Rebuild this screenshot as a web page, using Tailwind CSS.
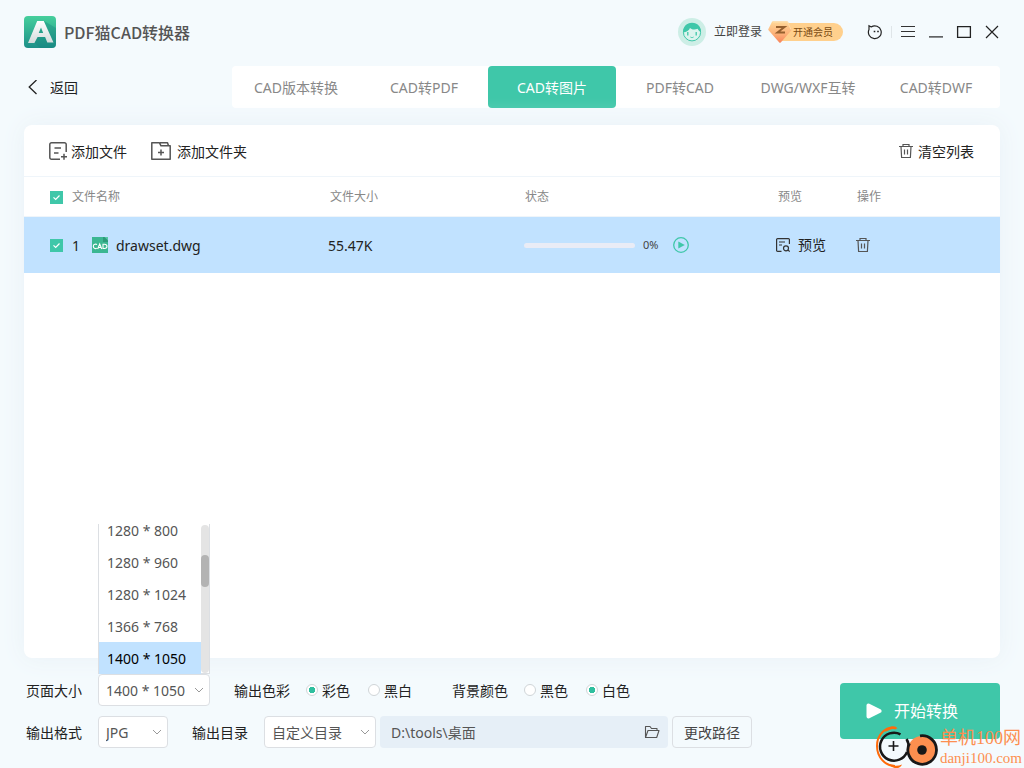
<!DOCTYPE html>
<html lang="zh-CN">
<head>
<meta charset="utf-8">
<meta name="viewport" content="width=device-width, initial-scale=1">
<title>PDF猫CAD转换器</title>
<script src="https://cdn.jsdelivr.net/npm/@tailwindcss/browser@4"></script>
</head>
<body class="relative flex min-h-screen flex-col bg-[#f4fafd] px-6 pb-5 font-['Noto_Sans','Noto_Sans_CJK_SC',sans-serif] text-sm leading-5 text-[#222]">

<header class="flex h-16 items-center justify-between">
  <div class="flex items-center gap-2">
    <svg class="size-8" viewBox="0 0 32 32" aria-hidden="true">
      <defs>
        <linearGradient id="logoBg" x1="0" y1="0" x2="0" y2="1"><stop offset="0" stop-color="#46cf9c"/><stop offset="1" stop-color="#1c8f88"/></linearGradient>
        <linearGradient id="logoA" x1="0" y1="0" x2="0" y2="1"><stop offset="0" stop-color="#ffffff"/><stop offset="1" stop-color="#d3dbdb"/></linearGradient>
      </defs>
      <rect width="32" height="32" rx="4" fill="url(#logoBg)"/>
      <path d="M20 5l12 7v16a4 4 0 0 1-4 4H16l-6-6z" fill="#15807c" opacity=".35"/>
      <path d="M13.200 5h6.600L29.500 26.500h-6.200l-2.200-5.500h-7.500l-3.200 6H4z M17 11.500l-2.300 5.500h4.500z" fill="url(#logoA)" fill-rule="evenodd"/>
    </svg>
    <h1 class="font-['Noto_Sans_CJK_SC',sans-serif] text-base leading-6 font-medium text-[#555]">PDF猫CAD转换器</h1>
  </div>
  <div class="flex items-center">
    <button type="button" class="flex items-center gap-2 text-xs text-[#444]">
      <svg class="size-7" viewBox="0 0 28 28" aria-hidden="true">
        <circle cx="14" cy="14" r="14" fill="#cdeee6"/>
        <circle cx="14" cy="14.300" r="8.600" fill="#dcf4ee" stroke="#3fc7a9"/>
        <path d="M5.200 14.500C4.800 8.500 9 4.800 14 4.800c5.500 0 9.300 4 8.900 9.400-1.300-.6-2.400-1.700-3.200-3.400-3.500 1.500-6.500.6-7.700-.8-.9 2.400-3.500 4.200-6.800 4.500z" fill="#3fc7a9"/>
        <path d="M9.800 14v3.500M18.200 14v3.500" stroke="#3fc7a9" stroke-width="1.300"/>
        <path d="M12.300 19q1.700 1.500 3.400 0" fill="none" stroke="#3fc7a9" stroke-width=".8"/>
      </svg>
      立即登录
    </button>
    <button type="button" class="ml-1.5 flex items-center">
      <svg class="relative -mr-3 h-6 w-6" viewBox="0 0 24 24" aria-hidden="true">
        <defs><linearGradient id="gem" x1="0" y1="0" x2="0" y2="1"><stop offset="0" stop-color="#ffd596"/><stop offset=".6" stop-color="#fcb078"/><stop offset="1" stop-color="#f98a5e"/></linearGradient></defs>
        <path d="M5 2.500h14l3.500 7L12 21.500 1.500 9.500z" fill="url(#gem)" stroke="url(#gem)" stroke-width="2.500" stroke-linejoin="round"/>
        <path d="M5 2h14.500L23 9.500" fill="none" stroke="#ffe2b4" stroke-width="1" opacity=".8"/>
        <path d="M8 7h8.500L9.500 12.500H17" fill="none" stroke="#96602f" stroke-width="2"/>
      </svg>
      <span class="rounded-r-full bg-[#ffd08d] pr-2.5 pl-[13px] text-[10px] leading-[18px] text-[#7a4a12]">开通会员</span>
    </button>
    <button type="button" class="ml-6" aria-label="反馈">
      <svg class="size-4" viewBox="0 0 16 16" fill="none" stroke="#222" stroke-width="1.200" aria-hidden="true"><path d="M4.200 3A6.400 6.400 0 1 1 2 5.600L2 1.800l2.300 1.300"/><path d="M7.500 6.700v1.600M11 6.700v1.600" stroke-width="1.600"/></svg>
    </button>
    <span class="mx-2 h-3 w-px bg-[#dfe5e8]"></span>
    <div class="flex items-center gap-3">
      <button type="button" aria-label="菜单"><svg class="size-4" viewBox="0 0 16 16" stroke="#333" stroke-width="1" aria-hidden="true"><path d="M1 2.500h14M1 7.500h14M1 12.500h14"/></svg></button>
      <button type="button" aria-label="最小化"><svg class="size-4" viewBox="0 0 16 16" stroke="#222" stroke-width="1.200" aria-hidden="true"><path d="M1 12.900h14"/></svg></button>
      <button type="button" aria-label="最大化"><svg class="size-4" viewBox="0 0 16 16" fill="none" stroke="#222" stroke-width="1.300" aria-hidden="true"><path d="M1.600 2.600h12.800v10.800H1.600z"/></svg></button>
      <button type="button" aria-label="关闭"><svg class="size-4" viewBox="0 0 16 16" stroke="#222" stroke-width="1.200" aria-hidden="true"><path d="M2 2l12 12M14 2L2 14"/></svg></button>
    </div>
  </div>
</header>

<div class="mt-0.5 flex items-center">
  <div class="w-52 shrink-0 pt-0.5">
    <button type="button" class="flex items-center gap-3 pl-1">
      <svg class="h-4 w-2.5" viewBox="0 0 10 16" fill="none" stroke="#222" stroke-width="1.300" aria-hidden="true"><path d="M8.500 0L1.200 7l7.300 7"/></svg>
      返回
    </button>
  </div>
  <nav class="grid h-[42px] flex-1 grid-cols-6 rounded bg-white text-center leading-10 text-[#888]">
    <a href="#" class="pt-0.5">CAD版本转换</a>
    <a href="#" class="pt-0.5">CAD转PDF</a>
    <a href="#" aria-current="page" class="rounded bg-[#3fc7a9] pt-0.5 text-white">CAD转图片</a>
    <a href="#" class="pt-0.5">PDF转CAD</a>
    <a href="#" class="pt-0.5">DWG/WXF互转</a>
    <a href="#" class="pt-0.5">CAD转DWF</a>
  </nav>
</div>

<main class="mt-[17px] flex-1 rounded-lg bg-white shadow-[0_0_24px_#e9f1f6]">
  <div class="flex h-[52px] items-center border-b border-[#eff5fa] pr-[26px] pl-[25px]">
    <button type="button" class="flex items-center gap-1">
      <svg class="size-[18px]" viewBox="0 0 18 18" fill="none" stroke="#555" stroke-width="1.500" aria-hidden="true"><path d="M11 17.200H2.500A1.700 1.700 0 0 1 .8 15.500v-13A1.700 1.700 0 0 1 2.500.8h13a1.700 1.700 0 0 1 1.700 1.700V10M5.500 6H12M5 11h4.500M12 14.700h6M15 11.700v6"/></svg>
      <span class="pt-0.5">添加文件</span>
    </button>
    <button type="button" class="ml-6 flex items-center gap-1.5">
      <svg class="h-[18px] w-5" viewBox="0 0 20 18" fill="none" stroke="#555" stroke-width="1.500" stroke-linejoin="round" aria-hidden="true"><path d="M.8 17.200V.8h7.700l1.500 3h9.200v13.400zM9 .8h7.500l1 3M7 10.500h6M10 7.500v6"/></svg>
      <span class="pt-0.5">添加文件夹</span>
    </button>
    <button type="button" class="ml-auto flex items-center gap-1">
      <svg class="size-4" viewBox="0 0 16 16" fill="none" stroke="#555" stroke-width="1.200" aria-hidden="true"><path d="M1 3.500h14M5 3.300V1.500h6v1.800M3 3.500l.6 11h8.800l.6-11M6.500 6.500v5M9.500 6.500v5"/></svg>
      <span class="pt-0.5">清空列表</span>
    </button>
  </div>

  <table class="w-full table-fixed text-left">
    <colgroup><col class="w-[304px]"><col class="w-[196px]"><col><col class="w-20"><col class="w-36"></colgroup>
    <thead>
      <tr class="h-10 text-xs text-[#888] shadow-[inset_0_-1px_0_#eff5fa]">
        <th class="py-0 pl-[26px] font-normal">
          <label class="flex items-center gap-[9px]">
            <span class="grid">
              <input type="checkbox" checked class="size-[13px] appearance-none bg-[#3fc7a9] [grid-area:1/1]">
              <svg class="pointer-events-none size-[13px] [grid-area:1/1]" viewBox="0 0 13 13" fill="none" stroke="#fff" stroke-width="1.200" aria-hidden="true"><path d="M3.500 6.300l2.200 2.200L9.500 4.500"/></svg>
            </span>
            文件名称
          </label>
        </th>
        <th class="py-0 pl-0.5 font-normal">文件大小</th>
        <th class="py-0 pl-px font-normal">状态</th>
        <th class="py-0 pl-0.5 font-normal">预览</th>
        <th class="py-0 pl-px font-normal">操作</th>
      </tr>
    </thead>
    <tbody>
      <tr class="h-14 bg-[#c1e2ff]">
        <td class="py-0 pl-[26px]">
          <label class="flex items-center">
            <span class="grid">
              <input type="checkbox" checked class="size-[13px] appearance-none bg-[#3fc7a9] [grid-area:1/1]">
              <svg class="pointer-events-none size-[13px] [grid-area:1/1]" viewBox="0 0 13 13" fill="none" stroke="#fff" stroke-width="1.200" aria-hidden="true"><path d="M3.500 6.300l2.200 2.200L9.500 4.500"/></svg>
            </span>
            <span class="ml-[9px] w-5 pt-0.5">1</span>
            <svg class="size-4" viewBox="0 0 16 16" aria-hidden="true"><path d="M0 0h11l5 5v11H0z" fill="#3bb792"/><path d="M11 0h5v5h-5z" fill="#2c9a7a"/><path d="M12.500 0H16v3.500z" fill="#57c7a6"/><g fill="none" stroke="#fff" stroke-width="1.100"><path d="M5 7.700c-.8-.8-3.700-1-3.700 1.600S4.200 12 5 11M5.700 12l2-5 2 5M6.300 10.500h2.800M11 7.200v4.300h1.500c3.300 0 3.300-4.300 0-4.300z"/></g></svg>
            <span class="ml-2 pt-0.5">drawset.dwg</span>
          </label>
        </td>
        <td class="px-0 pt-0.5 pb-0">55.47K</td>
        <td class="p-0">
          <div class="flex items-center">
            <div role="progressbar" aria-label="转换进度" aria-valuenow="0" class="h-[5px] w-[111px] rounded-full bg-[#e9ecf6]"></div>
            <span class="ml-2 w-[30px] text-[11px] text-[#444]">0%</span>
            <button type="button" aria-label="开始"><svg class="block size-4" viewBox="0 0 16 16" aria-hidden="true"><circle cx="8" cy="8" r="7.300" fill="none" stroke="#3fc7a9" stroke-width="1.300"/><path d="M5.300 4.600v6.800L11.800 8z" fill="#3fc7a9"/></svg></button>
          </div>
        </td>
        <td class="p-0">
          <button type="button" class="flex items-center gap-2">
            <svg class="h-4 w-3.5" viewBox="0 0 14 16" fill="none" stroke="#333" stroke-width="1.200" aria-hidden="true"><path d="M5.500 14.400H1.600a1 1 0 0 1-1-1V2.600a1 1 0 0 1 1-1h10.800a1 1 0 0 1 1 1V7M3 5h6M3 8h3"/><circle cx="10" cy="11.300" r="2.500"/><path d="M11.800 13l2 1.600"/></svg>
            预览
          </button>
        </td>
        <td class="p-0">
          <button type="button" aria-label="删除" class="block"><svg class="h-4 w-3.5" viewBox="1 0 14 16" fill="none" stroke="#555" stroke-width="1.200" aria-hidden="true"><path d="M1 3.500h14M5 3.300V1.500h6v1.800M3 3.500l.6 11h8.800l.6-11M6.500 6.500v5M9.500 6.500v5"/></svg></button>
        </td>
      </tr>
    </tbody>
  </table>
</main>

<footer class="mt-4 flex items-center justify-between pl-0.5">
  <form class="flex flex-col gap-2.5">
    <div class="flex h-8 items-center">
      <label for="size" class="w-[72px] pt-0.5">页面大小</label>
      <div class="relative grid w-28 items-center">
        <select id="size" class="h-8 w-full appearance-none rounded border border-[#dcdfe3] bg-white pt-0.5 pl-[7px] text-[#555] [grid-area:1/1]"><option>1400 * 1050</option></select>
        <svg class="pointer-events-none mr-1.5 h-2 w-2.5 justify-self-end [grid-area:1/1]" viewBox="0 0 10 8" fill="none" stroke="#999" aria-hidden="true"><path d="M1 2l4 4 4-4"/></svg>
        <div class="absolute bottom-full left-0 flex h-[150px] w-full border-x border-b border-[#dcdfe3] bg-white">
          <ul role="listbox" aria-label="页面大小选项" class="-mb-px flex flex-1 flex-col justify-end overflow-hidden leading-[30px] text-[#555]">
            <li role="option" class="pt-0.5 pl-2">1280 * 800</li>
            <li role="option" class="pt-0.5 pl-2">1280 * 960</li>
            <li role="option" class="pt-0.5 pl-2">1280 * 1024</li>
            <li role="option" class="pt-0.5 pl-2">1366 * 768</li>
            <li role="option" aria-selected="true" class="bg-[#c1e2ff] pt-0.5 pl-2 text-black">1400 * 1050</li>
          </ul>
          <div class="mt-px w-2 rounded-full bg-[#e4e4e4] pt-[30px]"><div class="h-8 rounded-full bg-[#b3b3b3]"></div></div>
        </div>
      </div>
      <fieldset class="ml-6 flex items-center">
        <legend class="float-left w-[72px] pt-0.5">输出色彩</legend>
        <label class="flex w-[62px] items-center gap-1"><input type="radio" name="color" checked class="size-3 appearance-none rounded-full border border-[#d0d5d8] bg-white checked:bg-[radial-gradient(circle,#2fbf9f_3px,#fff_3px)]"><span class="pt-0.5">彩色</span></label>
        <label class="flex items-center gap-1"><input type="radio" name="color" class="size-3 appearance-none rounded-full border border-[#d0d5d8] bg-white checked:bg-[radial-gradient(circle,#2fbf9f_3px,#fff_3px)]"><span class="pt-0.5">黑白</span></label>
      </fieldset>
      <fieldset class="ml-10 flex items-center">
        <legend class="float-left w-[72px] pt-0.5">背景颜色</legend>
        <label class="flex w-[62px] items-center gap-1"><input type="radio" name="bg" class="size-3 appearance-none rounded-full border border-[#d0d5d8] bg-white checked:bg-[radial-gradient(circle,#2fbf9f_3px,#fff_3px)]"><span class="pt-0.5">黑色</span></label>
        <label class="flex items-center gap-1"><input type="radio" name="bg" checked class="size-3 appearance-none rounded-full border border-[#d0d5d8] bg-white checked:bg-[radial-gradient(circle,#2fbf9f_3px,#fff_3px)]"><span class="pt-0.5">白色</span></label>
      </fieldset>
    </div>
    <div class="flex h-8 items-center">
      <label for="format" class="w-[72px] pt-0.5">输出格式</label>
      <div class="grid w-[70px] items-center">
        <select id="format" class="h-8 w-full appearance-none rounded border border-[#dcdfe3] bg-white pt-0.5 pl-[7px] text-[#555] [grid-area:1/1]"><option>JPG</option></select>
        <svg class="pointer-events-none mr-1.5 h-2 w-2.5 justify-self-end [grid-area:1/1]" viewBox="0 0 10 8" fill="none" stroke="#999" aria-hidden="true"><path d="M1 2l4 4 4-4"/></svg>
      </div>
      <label for="dir" class="ml-6 w-[72px] pt-0.5">输出目录</label>
      <div class="grid w-28 items-center">
        <select id="dir" class="h-8 w-full appearance-none rounded border border-[#dcdfe3] bg-white pt-0.5 pl-[7px] text-[#555] [grid-area:1/1]"><option>自定义目录</option></select>
        <svg class="pointer-events-none mr-1.5 h-2 w-2.5 justify-self-end [grid-area:1/1]" viewBox="0 0 10 8" fill="none" stroke="#999" aria-hidden="true"><path d="M1 2l4 4 4-4"/></svg>
      </div>
      <div class="ml-1 flex h-8 w-72 items-center rounded bg-[#e6eff7] pr-2 pl-[11px]">
        <input type="text" aria-label="输出路径" value="D:\tools\桌面" class="min-w-0 flex-1 pt-0.5 text-[#555]">
        <button type="button" aria-label="打开文件夹"><svg class="block size-4" viewBox="0 0 16 16" fill="none" stroke="#555" stroke-width="1.100" stroke-linejoin="round" aria-hidden="true"><path d="M1.500 13.500V2.500h4.500l1.500 2h5.500v2M1.500 13.500l2.500-7h11l-2.300 7z"/></svg></button>
      </div>
      <button type="button" class="ml-1 h-8 w-20 rounded border border-[#dcdfe3] pt-0.5 text-[#444]">更改路径</button>
    </div>
  </form>
  <button type="button" class="flex h-14 w-40 items-center justify-center gap-3 rounded bg-[#3fc7a9] pr-4 text-base text-white">
    <svg class="h-[18px] w-4" viewBox="0 0 16 18" fill="#fff" stroke="#fff" stroke-width="4" stroke-linejoin="round" aria-hidden="true"><path d="M2.500 3.500v11L13.500 9z"/></svg>
    开始转换
  </button>
</footer>

<div class="absolute right-0.5 bottom-0 flex items-start gap-0.5 text-[#fd8f50]">
  <svg class="h-[42px] w-[62px]" viewBox="0 0 62 42" fill="none" aria-hidden="true">
    <path d="M20 2.500C10-1 1 9 1 20c0 11 8 20 18 20" stroke="#ff6b0a" stroke-width="2"/>
    <path d="M9 6c3-6 10-7.500 12.500-3.500-4.500 0-8 1-12.500 3.500zM13 38c5 2.500 9 2.300 13 .5-2 5-9 5-13-.5z" fill="#ff6b0a"/>
    <path d="M24.500 8.300A14 14 0 1 0 31 26M32.500 22a14 14 0 0 0-2-9" stroke="#181818" stroke-width="2.500"/>
    <path d="M17.500 15v10M12.500 20h10" stroke="#181818" stroke-width="1.600"/>
    <circle cx="46" cy="24" r="14" fill="#fd8f4f"/>
    <path d="M44 9.800a14.300 14.300 0 1 1-10.500 7.500" stroke="#181818" stroke-width="2.800"/>
    <circle cx="46" cy="24" r="4.800" fill="#181818"/>
  </svg>
  <div class="font-['Liberation_Serif','Noto_Sans_CJK_SC',serif]">
    <div class="text-lg leading-6">单机100网</div>
    <div class="text-[15px] leading-4">danji100.com</div>
  </div>
</div>
</body>
</html>
